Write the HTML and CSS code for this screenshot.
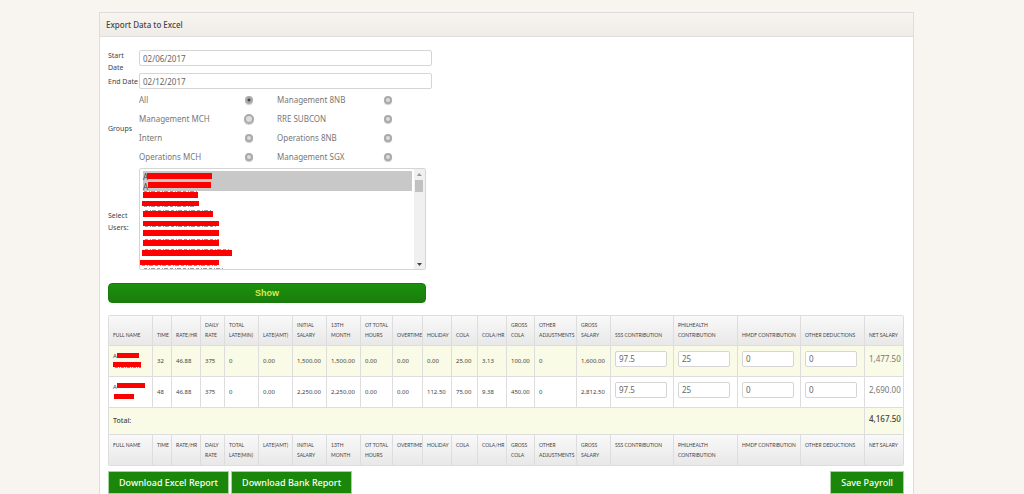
FILE: index.html
```html
<!DOCTYPE html>
<html lang="en">
<head>
<meta charset="utf-8">
<title>Export Data to Excel</title>
<link rel="stylesheet" href="styles.css">
</head>
<body>
<main class="panel">
<h1 class="panel-title">Export Data to Excel</h1>
<div class="panel-body">
<form class="filters">
<label class="label" for="start">Start Date</label>
<input class="date" id="start" type="text" value="02/06/2017">
<label class="label" for="end">End Date</label>
<input class="date" id="end" type="text" value="02/12/2017">
<span class="label" id="groups">Groups</span>
<div class="groups" role="radiogroup" aria-labelledby="groups">
<label class="group">All<input type="radio" name="group" checked></label>
<label class="group">Management 8NB<input type="radio" name="group"></label>
<label class="group">Management MCH<input class="large" type="radio" name="group"></label>
<label class="group">RRE SUBCON<input type="radio" name="group"></label>
<label class="group">Intern<input type="radio" name="group"></label>
<label class="group">Operations 8NB<input type="radio" name="group"></label>
<label class="group">Operations MCH<input type="radio" name="group"></label>
<label class="group">Management SGX<input type="radio" name="group"></label>
</div>
<label class="label users-label" for="users">Select Users:</label>
<div class="users">
<select class="user-list" id="users" multiple>
<option selected>A</option>
<option selected>A</option>
</select>
<svg class="redactions" width="100" height="100" viewBox="0 0 100 100" aria-hidden="true">
<g stroke="#999" stroke-width="1" stroke-dasharray="3 2 1 1 4 2">
<path d="M9 9.500H71M9 18.500H71M5 22.500H58M5 37.500H57M6 41.500H72M6 57.500H78M6 66.500H78M6 70.500H80M6 80.500H90M3 96.500H78M5 99.500H84"/>
</g>
<g fill="#f00">
<path d="M8 4h65v6H8zM9 13h63v6H9zM4 23h55v6H4zM3 32h57v5H3zM4 42h70v6H4zM4 52h76v5H4zM4 61h76v6H4zM4 71h76v6H4zM3 81h90v6H3zM1 91h79v5H1z"/>
</g>
</svg>
<svg class="scrollbar" width="11" height="100" viewBox="0 0 11 100" aria-hidden="true">
<path fill="#f0f0f0" d="M0 0h11v100H0z"/>
<path fill="#c1c1c1" d="M1 11h8v12H1z"/>
<path fill="#999" d="M3 7l2-3 3 3z"/>
<path fill="#444" d="M3 94h5l-2.500 3z"/>
</svg>
</div>
<button class="show" type="button">Show</button>
</form>
<table class="payroll">
<colgroup>
<col class="w44"><col class="w19"><col class="w29"><col class="w24"><col class="w34"><col class="w34"><col class="w34"><col class="w34"><col class="w32"><col class="w30"><col class="w29"><col class="w26"><col class="w29"><col class="w28"><col class="w42"><col class="w34"><col class="w63"><col class="w64"><col class="w63"><col class="w64"><col>
</colgroup>
<thead>
<tr><th>Full Name</th><th>Time</th><th>Rate/Hr</th><th>Daily<br>Rate</th><th>Total<br>Late(Min)</th><th>Late(Amt)</th><th>Initial<br>Salary</th><th>13th<br>Month</th><th>OT Total<br>Hours</th><th>Overtime</th><th>Holiday</th><th>COLA</th><th>COLA/Hr</th><th>Gross<br>COLA</th><th>Other<br>Adjustments</th><th>Gross<br>Salary</th><th>SSS Contribution</th><th>PhilHealth<br>Contribution</th><th>HMDF Contribution</th><th>Other Deductions</th><th>Net Salary</th></tr>
</thead>
<tbody>
<tr class="odd"><td><span class="name">A<svg class="strike" width="34" height="20" viewBox="0 0 34 20" aria-hidden="true"><path fill="#f00" d="M4 2h22v5H4zM0 11h28v5H0z"/><path stroke="#888" stroke-dasharray="3 1 1 1" d="M2 16.500H28"/></svg></span></td><td>32</td><td>46.88</td><td>375</td><td>0</td><td>0.00</td><td>1,500.00</td><td>1,500.00</td><td>0.00</td><td>0.00</td><td>0.00</td><td>25.00</td><td>3.13</td><td>100.00</td><td>0</td><td>1,600.00</td><td><input class="amount" aria-label="SSS contribution" value="97.5"></td><td><input class="amount" aria-label="PhilHealth contribution" value="25"></td><td><input class="amount" aria-label="HMDF contribution" value="0"></td><td><input class="amount" aria-label="Other deductions" value="0"></td><td class="net">1,477.50</td></tr>
<tr><td><span class="name">A<svg class="strike" width="34" height="20" viewBox="0 0 34 20" aria-hidden="true"><path fill="#f00" d="M4 1h28v5H4zM1 12h20v5H1z"/></svg></span></td><td>48</td><td>46.88</td><td>375</td><td>0</td><td>0.00</td><td>2,250.00</td><td>2,250.00</td><td>0.00</td><td>0.00</td><td>112.50</td><td>75.00</td><td>9.38</td><td>450.00</td><td>0</td><td>2,812.50</td><td><input class="amount" aria-label="SSS contribution" value="97.5"></td><td><input class="amount" aria-label="PhilHealth contribution" value="25"></td><td><input class="amount" aria-label="HMDF contribution" value="0"></td><td><input class="amount" aria-label="Other deductions" value="0"></td><td class="net">2,690.00</td></tr>
<tr class="odd total"><td colspan="20">Total:</td><td class="net">4,167.50</td></tr>
</tbody>
<tfoot>
<tr><th>Full Name</th><th>Time</th><th>Rate/Hr</th><th>Daily<br>Rate</th><th>Total<br>Late(Min)</th><th>Late(Amt)</th><th>Initial<br>Salary</th><th>13th<br>Month</th><th>OT Total<br>Hours</th><th>Overtime</th><th>Holiday</th><th>COLA</th><th>COLA/Hr</th><th>Gross<br>COLA</th><th>Other<br>Adjustments</th><th>Gross<br>Salary</th><th>SSS Contribution</th><th>PhilHealth<br>Contribution</th><th>HMDF Contribution</th><th>Other Deductions</th><th>Net Salary</th></tr>
</tfoot>
</table>
<div class="actions">
<button class="action" type="button">Download Excel Report</button>
<button class="action" type="button">Download Bank Report</button>
<button class="action save" type="button">Save Payroll</button>
</div>
</div>
</main>
</body>
</html>
```
FILE: styles.css
```css
* { box-sizing: border-box; }
body {
  margin: 0;
  min-height: 100vh;
  padding: 12px 110px 0 99px;
  display: flex;
  background: #f8f5f1;
  color: #444;
  font-family: "Noto Sans", sans-serif;
  font-size: 8px;
}
.panel {
  flex: 1;
  min-width: 0;
  background: #fff;
  border: 1px solid #ddd;
  border-bottom: 0;
}
.panel-title {
  margin: 0;
  padding: 0 6px;
  font-size: 8px;
  font-weight: 500;
  line-height: 23px;
  background: linear-gradient(#f8f5f1, #efece7);
  border-bottom: 1px solid #ddd;
}
.panel-body { padding: 13px 9px 0 8px; }
.filters {
  display: grid;
  grid-template-columns: 31px 293px;
  grid-template-rows: 23px 17px 78px 102px 33px;
  align-items: center;
}
.label {
  font-size: 7px;
  line-height: 12px;
}
.users-label { padding-top: 6px; }
.date, .amount {
  display: block;
  width: 100%;
  height: 16px;
  margin: 0;
  padding: 0 3px;
  border: 1px solid #d5d5d5;
  border-radius: 2px;
  background: #fff;
  color: #666;
  font-family: inherit;
  font-size: 8px;
}
.date { align-self: start; }
.groups {
  display: grid;
  grid-template-columns: 115px 116px;
  grid-auto-rows: 19px;
  column-gap: 23px;
  align-self: start;
  color: #777;
}
.group {
  display: flex;
  align-items: center;
  justify-content: space-between;
}
.group input {
  appearance: none;
  width: 8px;
  height: 8px;
  margin: 0 1px;
  border: 2px solid #aaa;
  border-radius: 50%;
  background: #ddd;
  box-shadow: 0 1px 1px #ccc;
}
.group .large { width: 10px; height: 10px; margin: 0; }
.group input:checked { background: radial-gradient(#444 1px, #aaa 2px); }
.users {
  position: relative;
  width: 287px;
  height: 102px;
}
.user-list {
  display: block;
  width: 100%;
  height: 100%;
  margin: 0;
  padding: 2px 13px 0 3px;
  border: 1px solid #d5d5d5;
  border-radius: 2px;
  background: #fff;
  overflow: hidden;
  font-family: inherit;
  font-size: 8px;
}
.user-list option {
  min-height: 10px;
  height: 10px;
  padding: 0;
  line-height: 10px;
  color: #444;
}
.user-list option:checked { background: #c8c8c8 linear-gradient(#c8c8c8, #c8c8c8); }
.redactions { position: absolute; top: 1px; left: 0; }
.scrollbar { position: absolute; top: 1px; right: 1px; }
.show {
  grid-column: 1 / -1;
  align-self: end;
  width: 318px;
  height: 20px;
  padding: 0;
  border: 1px solid #187a0a;
  border-radius: 4px;
  background: linear-gradient(#1a910c, #1b7d0c);
  color: #dbe84d;
  font-family: "Liberation Sans", Arial, sans-serif;
  font-size: 9px;
  font-weight: bold;
}
.payroll {
  width: 100%;
  margin-top: 12px;
  table-layout: fixed;
  border-collapse: separate;
  border-spacing: 0;
  border: 1px solid #ddd;
  border-left: 0;
  border-radius: 2px;
  font-size: 6px;
}
.payroll th, .payroll td {
  height: 31px;
  padding: 0 0 0 4px;
  border-left: 1px solid #ddd;
  border-bottom: 1px solid #ddd;
  text-align: left;
  line-height: 10px;
  white-space: nowrap;
}
.payroll th {
  height: 30px;
  padding-bottom: 5px;
  vertical-align: bottom;
  background: linear-gradient(#f9f9f9, #e8e8e8);
  font-family: Lato, sans-serif;
  font-size: 5px;
  font-weight: 400;
  text-transform: uppercase;
}
.payroll tfoot th {
  padding-top: 5px;
  border-bottom: 0;
  vertical-align: top;
}
.payroll .odd td { background: #f9fbe6; }
.payroll .total td { height: 27px; font-size: 7px; font-weight: 500; }
.payroll .net {
  padding-bottom: 4px;
  color: #777;
  font-size: 8px;
}
.payroll .total .net { color: #444; font-size: 8px; }
.amount { width: 52px; margin-bottom: 5px; }
.name {
  position: relative;
  display: block;
  height: 20px;
}
.strike { position: absolute; top: 0; left: 0; }
.w19 { width: 19px; } .w24 { width: 24px; } .w26 { width: 26px; }
.w28 { width: 28px; } .w29 { width: 29px; } .w30 { width: 30px; }
.w32 { width: 32px; } .w34 { width: 34px; } .w42 { width: 42px; }
.w44 { width: 44px; } .w63 { width: 63px; } .w64 { width: 64px; }
.actions {
  display: flex;
  gap: 2px;
  padding-top: 5px;
}
.action {
  height: 23px;
  padding: 0 10px;
  border: 1px solid #a5d29d;
  background: #1a870b;
  color: #fff;
  font-family: inherit;
  font-size: 9px;
  font-weight: 500;
}
.save { margin-left: auto; }
```
